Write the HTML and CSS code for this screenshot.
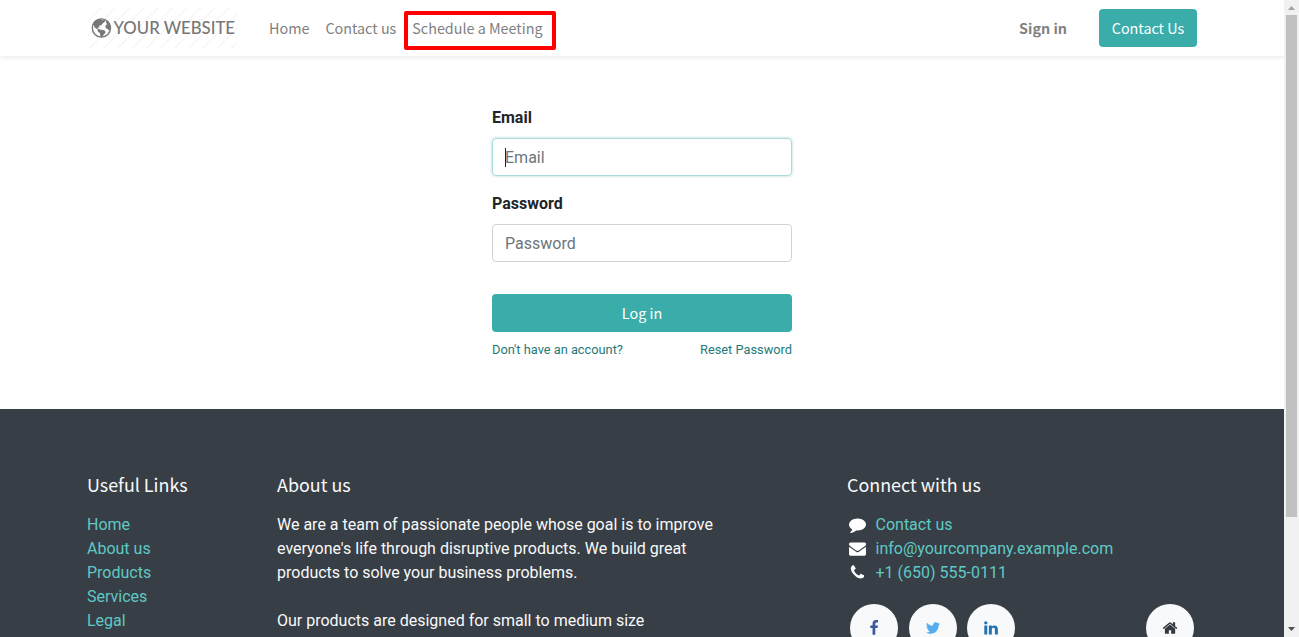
FILE: index.html
```html
<!DOCTYPE html>
<html lang="en">
<head>
<meta charset="utf-8">
<title>Login | My Website</title>
<link rel="stylesheet" href="styles.css">
</head>
<body>
<div class="window">
  <div class="page">
    <header class="header">
      <div class="container header-row">
        <a class="logo">
          <svg width="150" height="40" viewBox="0 0 150 40">
            <defs>
              <pattern id="hatch" width="14.2" height="14.2" patternUnits="userSpaceOnUse">
                <path d="M-2 16.2L16.2-2M-2 2L2-2M12.2 16.2L16.2 12.2" stroke="#ececec" stroke-width="0.9"/>
              </pattern>
            </defs>
            <rect width="150" height="40" fill="url(#hatch)"/>
            <circle cx="14.4" cy="20" r="9.1" fill="#fff" stroke="#777" stroke-width="1.4"/>
            <path fill="#777" d="M5.5 16.5C7 12.8 10 10.6 14 10.7L15.2 12.2 17.6 11.8 18.2 13.6 15.8 15.2 14.2 17.2 12 17.8 12.6 19.6 10.9 19.4 10.6 20.6 13 21.4 17.8 22.6 18.6 24.4 16.8 26.4 15.2 29.2 13.4 28.4 13 25.2 10.8 23.6 10.6 21.600 7.6 19.6 6.8 17.2Z"/>
            <path fill="#777" d="M19.2 12.2C22 14 23.8 17 23.5 20.8L22.2 22.8 20.6 21 18.8 20.2 18.4 17.6 20.2 16.2 19 14.6Z"/>
            <text class="logo-text" x="26.5" y="26" textLength="121.5">YOUR WEBSITE</text>
          </svg>
        </a>
        <nav class="nav">
          <a>Home</a>
          <a>Contact us</a>
          <a class="marked">Schedule a Meeting</a>
        </nav>
        <a class="signin">Sign in</a>
        <a class="btn btn-contact">Contact Us</a>
      </div>
    </header>

    <main class="main">
      <form class="login">
        <label class="label">Email</label>
        <div class="field focused"><span class="caret"></span>Email</div>
        <label class="label">Password</label>
        <div class="field">Password</div>
        <a class="btn btn-login">Log in</a>
        <div class="login-links"><a>Don't have an account?</a><a>Reset Password</a></div>
      </form>
    </main>

    <footer class="footer">
      <div class="container footer-row">
        <section class="col-links">
          <h5 class="heading">Useful Links</h5>
          <ul class="list">
            <li><a>Home</a></li>
            <li><a>About us</a></li>
            <li><a>Products</a></li>
            <li><a>Services</a></li>
            <li><a>Legal</a></li>
          </ul>
        </section>
        <section class="col-about">
          <h5 class="heading">About us</h5>
          <p>We are a team of passionate people whose goal is to improve<br>everyone's life through disruptive products. We build great<br>products to solve your business problems.</p>
          <p class="second">Our products are designed for small to medium size</p>
        </section>
        <section class="col-connect">
          <h5 class="heading">Connect with us</h5>
          <ul class="list contact">
            <li><svg class="icon" viewBox="0 0 1792 1792"><path d="M1792 896q0 174-120 321.500t-326 233-450 85.500q-70 0-145-8-198 175-460 242-49 14-114 22-17 2-30.500-9t-17.500-29v-1q-3-4-.5-12t2-10 4.500-9.500l6-9 7-8.500 8-9q7-8 31-34.500t34.500-38 31-39.500 32.500-51 27-59 26-76q-157-89-247.500-220t-90.500-281q0-130 71-248.500t191-204.500 286-136.500 348-50.500q244 0 450 85.500t326 233 120 321.500z"/></svg><a>Contact us</a></li>
            <li><svg class="icon" viewBox="0 0 1792 1792"><path d="M1792 710v794q0 66-47 113t-113 47h-1472q-66 0-113-47t-47-113v-794q44 49 101 87 362 246 497 345 57 42 92.500 65.500t94.500 48 110 24.500h2q51 0 110-24.500t94.500-48 92.500-65.500q170-123 498-345 57-39 100-87zm0-294q0 79-49 151t-122 123q-376 261-468 325-10 7-42.500 31t-54 38.500-52 32.500-57.500 27-50 9h-2q-23 0-50-9t-57.500-27-52-32.500-54-38.500-42.500-31q-91-64-262-182.500t-205-142.500q-62-42-117-115.500t-55-136.500q0-78 41.500-130t118.500-52h1472q65 0 112.500 47t47.500 113z"/></svg><a>info@yourcompany.example.com</a></li>
            <li><svg class="icon" viewBox="0 0 1792 1792"><path d="M1600 1240q0 27-10 70.500t-21 68.500q-21 50-122 106-94 51-186 51-27 0-52.500-3.500t-57.500-12.500-47.500-14.500-55.500-20.500-49-18q-98-35-175-83-128-79-264.500-215.500t-215.500-264.500q-48-77-83-175-3-9-18-49t-20.500-55.500-14.500-47.500-12.500-57.500-3.500-52.500q0-92 51-186 56-101 106-122 25-11 68.500-21t70.500-10q14 0 21 3 18 6 53 76 11 19 30 54t35 63.500 31 53.500q3 4 17.500 25t21.500 35.500 7 28.500q0 20-28.500 50t-62 55-62 53-28.500 46q0 9 5 22.500t8.500 20.500 14 24 11.500 19q76 137 174 235t235 174q2 1 19 11.500t24 14 20.500 8.500 22.500 5q18 0 46-28.500t53-62 55-62 50-28.500q14 0 28.500 7t35.500 21.500 25 17.500q25 15 53.500 31t63.500 35 54 30q70 35 76 53 3 7 3 21z"/></svg><a>+1 (650) 555-0111</a></li>
          </ul>
          <div class="social">
            <a class="bubble"><svg viewBox="0 0 1792 1792" fill="#3b5998"><path d="M1343 12v264h-157q-86 0-116 36t-30 108v189h293l-39 296h-254v759h-306v-759h-255v-296h255v-218q0-186 104-288.500t277-102.500q147 0 228 12z"/></svg></a>
            <a class="bubble"><svg viewBox="0 0 1792 1792" fill="#55acee"><path d="M1684 408q-67 98-162 167 1 14 1 42 0 130-38 259.500t-115.500 248.500-184.500 210.500-258 146-323 54.500q-271 0-496-145 35 4 78 4 225 0 401-138-105-2-188-64.500t-114-159.500q33 5 61 5 43 0 85-11-112-23-185.500-111.500t-73.500-205.500v-4q68 38 146 41-66-44-105-115t-39-154q0-88 44-163 121 149 294.500 238.500t371.500 99.500q-8-38-8-74 0-134 94.500-228.500t228.500-94.500q140 0 236 102 109-21 205-78-37 115-142 178 93-10 186-50z"/></svg></a>
            <a class="bubble"><svg viewBox="0 0 1792 1792" fill="#2272b6"><path d="M477 625v991h-330v-991h330zm21-306q1 73-50.500 122t-135.500 49h-2q-82 0-132-49t-50-122q0-74 51.500-122.500t134.500-48.500 133 48.500 51 122.500zm1166 729v568h-329v-530q0-105-40.500-164.500t-126.500-59.500q-63 0-105.500 34.500t-63.500 85.500q-11 30-11 81v553h-329q2-399 2-647t-1-296l-1-48h329v144h-2q20-32 41-56t56.500-52 87-43.500 114.500-15.500q171 0 275 113.500t104 332.500z"/></svg></a>
            <a class="bubble home"><svg viewBox="0 0 1792 1792" fill="#343a40"><path d="M1472 992v480q0 26-19 45t-45 19h-384v-384h-256v384h-384q-26 0-45-19t-19-45v-480q0-1 .5-3t.5-3l575-474 575 474q1 2 1 6zm223-69l-62 74q-8 9-21 11h-3q-13 0-21-7l-692-577-692 577q-12 8-24 7-13-2-21-11l-62-74q-8-10-7-23.500t11-21.500l719-599q32-26 76-26t76 26l244 204v-195q0-14 9-23t23-9h192q14 0 23 9t9 23v408l219 182q10 8 11 21.500t-7 23.500z"/></svg></a>
          </div>
        </section>
      </div>
    </footer>
  </div>
  <div class="scrollbar">
    <svg width="15" height="15" viewBox="0 0 15 15"><path d="M4 10h7L7.500 6z" fill="#a3a3a3"/></svg>
    <div class="thumb"></div>
    <svg class="down" width="15" height="15" viewBox="0 0 15 15"><path d="M4 5h7L7.500 9z" fill="#505050"/></svg>
  </div>
</div>
</body>
</html>
```
FILE: styles.css
```css
*, *::after { box-sizing: border-box; }
body {
  margin: 0;
  font: 16px/24px Roboto, sans-serif;
  color: #212529;
  background: #fff;
}
.window { display: flex; width: 1299px; height: 637px; overflow: hidden; }
.page { width: 1284px; display: flex; flex-direction: column; }
.container { width: 1140px; margin: 0 auto; padding: 0 15px; }

.header { height: 56px; flex: none; box-shadow: 0 2px 4px rgba(0, 0, 0, 0.075); }
.header-row { display: flex; align-items: center; height: 56px; }
.logo { width: 150px; height: 40px; margin-right: 24px; }
.logo svg { display: block; }
.logo-text { font: 500 16.8px Lato, sans-serif; fill: #777; }
.nav, .signin, .btn, .heading { font-family: "Noto Sans CJK SC", sans-serif; }
.nav, .signin, .btn { font-size: 14.35px; line-height: 24px; }
.nav { display: flex; color: #808080; }
.nav a { padding: 8px; white-space: nowrap; }
.nav .marked { position: relative; }
.nav .marked::after {
  content: "";
  position: absolute;
  left: 0;
  top: 3px;
  width: 152px;
  height: 39px;
  border: 4px solid #f00;
  border-radius: 2px;
}
.signin { margin-left: auto; font-weight: 700; color: #808080; }
.btn {
  display: block;
  height: 38px;
  padding: 7px 0;
  border-radius: 4px;
  background: #3aadaa;
  color: #fff;
  text-align: center;
}
.btn-contact { width: 98px; margin-left: 32px; }

.main { height: 353px; flex: none; padding-top: 50px; }
.login { width: 300px; margin: 0 auto; }
.label { display: block; font-weight: 700; margin-bottom: 8px; }
.field {
  height: 38px;
  padding: 7px 12px 5px;
  margin-bottom: 16px;
  border: 1px solid #ced4da;
  border-radius: 4px;
  color: #6c757d;
  position: relative;
}
.focused { border-color: #a7dcdb; box-shadow: 0 0 3px rgba(53, 151, 156, 0.4); }
.caret { position: absolute; left: 12px; top: 9px; width: 1px; height: 19px; background: #212529; }
.btn-login { margin-top: 32px; }
.login-links {
  display: flex;
  justify-content: space-between;
  margin-top: 8px;
  font-size: 12.8px;
  line-height: 20px;
  color: #1f7a78;
}

.footer { flex: none; height: 400px; padding-top: 63px; background: #383e45; color: #f8f9fa; }
.footer-row { display: flex; }
.col-links { width: 190px; }
.col-about { width: 570px; }
.col-connect { width: 350px; }
.heading { margin: 0 0 17px; font-size: 17.9px; line-height: 24px; font-weight: 400; }
.list { margin: 0; padding: 0; list-style: none; color: #5fc9c6; }
p { margin: 0; }
.second { margin-top: 24px; }
.contact li { display: flex; align-items: center; }
.icon { width: 17px; height: 17px; margin: 0 9.5px 2px 2px; fill: #fff; }
.social { display: flex; margin: 19px 0 0 3px; }
.bubble {
  display: flex;
  align-items: center;
  justify-content: center;
  width: 48px;
  height: 48px;
  margin-right: 10.5px;
  border-radius: 50%;
  background: #f8f9fa;
}
.bubble svg { width: 16px; height: 16px; }
.home { margin: 0 3px 0 auto; }

.scrollbar { display: flex; flex-direction: column; align-items: center; width: 15px; background: #f1f1f1; }
.scrollbar svg { flex: none; }
.thumb { width: 11px; height: 502px; background: #c1c1c1; }
.down { margin-top: auto; }
```
